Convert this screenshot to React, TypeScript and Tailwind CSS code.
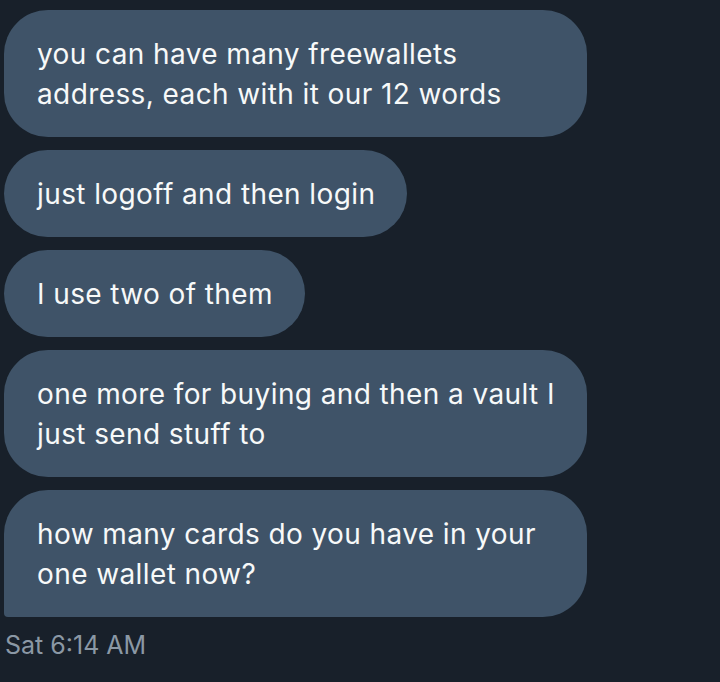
import React from 'react';

const messages = [
  'you can have many freewallets address, each with it our 12 words',
  'just logoff and then login',
  'I use two of them',
  'one more for buying and then a vault I just send stuff to',
  'how many cards do you have in your one wallet now?',
];

export default function App() {
  return (
    <div
      className="w-[720px] h-[682px] bg-[#18202a] pt-[10px] pl-[4px] overflow-hidden"
      style={{ fontFamily: 'Inter, "Noto Sans", sans-serif' }}
    >
      <div className="flex flex-col items-start gap-[13px]">
        {messages.map((m, i) => (
          <div
            key={i}
            className={`max-w-[583px] bg-[#3f5368] text-[#f7f9f9] text-[28px] leading-[40px] tracking-[0.4px] pl-[33px] pr-[32px] py-[23.5px] rounded-[44px] ${
              i === messages.length - 1 ? 'rounded-bl-[4px]' : ''
            }`}
          >
            {m}
          </div>
        ))}
      </div>
      <div className="mt-[12px] pl-[1px] text-[25px] leading-[32px] text-[#8b98a5]">Sat 6:14 AM</div>
    </div>
  );
}
